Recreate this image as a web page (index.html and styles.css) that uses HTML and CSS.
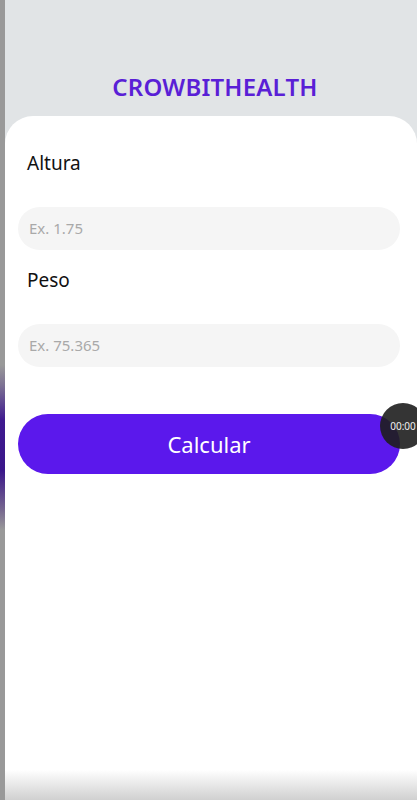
FILE: index.html
```html
<!DOCTYPE html>
<html lang="pt">
<head>
<meta charset="utf-8">
<link rel="stylesheet" href="styles.css">
</head>
<body>
<div class="screen">
  <div class="edge"></div>
  <div class="app">
    <header class="top">
      <h1 class="title">CROWBITHEALTH</h1>
    </header>
    <main class="card">
      <label class="label">Altura</label>
      <div class="input">Ex. 1.75</div>
      <label class="label label-peso">Peso</label>
      <div class="input">Ex. 75.365</div>
      <div class="btn-wrap">
        <button class="btn">Calcular</button>
        <div class="timer">00:00</div>
      </div>
    </main>
    <div class="fade"></div>
  </div>
</div>
</body>
</html>
```
FILE: styles.css
```css
html, body {
  margin: 0;
  padding: 0;
  height: 100%;
}
body {
  font-family: "Noto Sans", "Open Sans", sans-serif;
  background: #e1e4e6;
  overflow: hidden;
}
.screen {
  display: flex;
  height: 800px;
}
.edge {
  width: 5px;
  flex: none;
  background: linear-gradient(to bottom, #999 0, #999 365px, #7d7293 385px, #3f1a8f 420px, #3a168a 470px, #77688f 510px, #999 530px, #999 100%);
}
.app {
  flex: 1;
  display: flex;
  flex-direction: column;
  position: relative;
}
.top {
  height: 116px;
  flex: none;
  display: flex;
  justify-content: center;
  box-sizing: border-box;
  padding-top: 70px;
}
.title {
  margin: 0;
  font-size: 24px;
  line-height: 34px;
  font-weight: 600;
  color: #5a1fd6;
  letter-spacing: 0.2px;
  transform: translateX(4px);
}
.card {
  flex: 1;
  background: #fff;
  border-radius: 28px 28px 0 0;
  padding: 0 17px 0 13px;
  display: flex;
  flex-direction: column;
}
.label {
  display: block;
  margin: 33px 0 0 9px;
  font-size: 19px;
  line-height: 28px;
  color: #111;
}
.label-peso {
  margin-top: 16px;
}
.input {
  margin-top: 30px;
  height: 43px;
  border-radius: 22px;
  background: #f5f5f5;
  color: #a9a9a9;
  font-size: 15px;
  line-height: 43px;
  padding-left: 11px;
}
.btn-wrap {
  position: relative;
  margin-top: 47px;
}
.btn {
  display: block;
  width: 100%;
  height: 60px;
  border: none;
  border-radius: 30px;
  background: #5b18ec;
  color: #fff;
  font-family: inherit;
  font-size: 22px;
  padding: 0;
}
.timer {
  position: absolute;
  left: 362px;
  top: -11px;
  width: 46px;
  height: 46px;
  border-radius: 50%;
  background: rgba(30, 30, 30, 0.9);
  color: #eee;
  font-size: 10px;
  display: flex;
  align-items: center;
  justify-content: center;
}
.fade {
  position: absolute;
  left: 0;
  right: 0;
  bottom: 0;
  height: 30px;
  background: linear-gradient(to bottom, rgba(255,255,255,0), #d0d0d0);
}
```
